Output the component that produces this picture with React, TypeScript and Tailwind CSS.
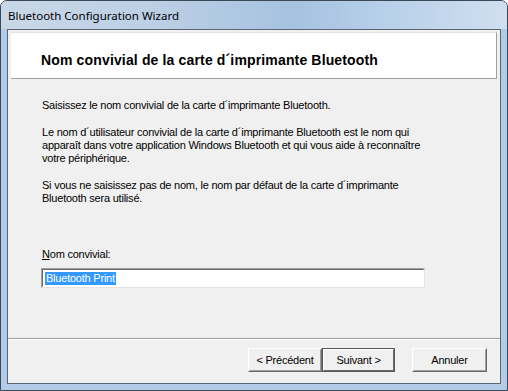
export default function App() {
  const sys = { fontFamily: '"Liberation Sans", Arial, sans-serif' };
  return (
    <div className="w-[508px] h-[391px] overflow-hidden bg-white">
      <div className="w-[508px] h-[391px] flex flex-col rounded-t-[7px] border border-[#3b4858] bg-[#b3cbe6] overflow-hidden">
        <div
          className="h-[28px] shrink-0 flex items-center pl-[7px] pt-[2px] text-[11.5px] text-black bg-[linear-gradient(90deg,#c9d8e8_0%,#bccfe5_30%,#a6c2e0_58%,#b7cfe9_75%,#cfdff0_100%)]"
          style={{ fontFamily: '"Noto Sans", "Open Sans", sans-serif' }}
        >
          Bluetooth Configuration Wizard
        </div>
        <div className="flex-1 mx-[6px] mb-[6px] border border-[#5b6675] bg-[#f0f0f0] flex flex-col" style={sys}>
          <div className="mt-[2px] mx-[3px] h-[47px] shrink-0 bg-white border-b border-r border-[#a0a0a0] border-t border-t-[#e3e3e3] pt-[19px] pl-[30px]">
            <div className="text-[14px] font-bold leading-[16px] text-black tracking-[0.15px]">
              Nom convivial de la carte d´imprimante Bluetooth
            </div>
          </div>
          <div className="pl-[34px] text-[11px] leading-[13px] text-black tracking-[-0.22px]">
            <p className="mt-[20px]">Saisissez le nom convivial de la carte d´imprimante Bluetooth.</p>
            <p className="mt-[14px]">
              Le nom d´utilisateur convivial de la carte d´imprimante Bluetooth est le nom qui
              <br />
              apparaît dans votre application Windows Bluetooth et qui vous aide à reconnaître
              <br />
              votre périphérique.
            </p>
            <p className="mt-[14px]">
              Si vous ne saisissez pas de nom, le nom par défaut de la carte d´imprimante
              <br />
              Bluetooth sera utilisé.
            </p>
            <p className="mt-[43px]">
              <span className="underline">N</span>om convivial:
            </p>
          </div>
          <div className="ml-[33px] mt-[7px] w-[384px] h-[20px] border border-t-[#a0a0a0] border-l-[#a0a0a0] border-b-[#e3e3e3] border-r-[#e3e3e3] bg-white">
            <div className="h-full border border-t-[#696969] border-l-[#696969] border-b-white border-r-white flex items-center pl-[2px]">
              <span className="bg-[#3399ff] text-white text-[11px] leading-[13px] px-[1px] tracking-[-0.22px]">Bluetooth Print</span>
            </div>
          </div>
          <div className="flex-1" />
          <div className="h-[2px] border-t border-[#a0a0a0] border-b border-b-white mx-0" />
          <div className="flex justify-end pt-[8px] pb-[11px] pr-[13px] text-[11px] text-black tracking-[-0.22px]">
            <button className="w-[74px] h-[24px] bg-[#f0f0f0] border border-t-white border-l-white border-b-[#696969] border-r-[#696969]">
              <div className="h-full flex items-center justify-center border border-transparent border-b-[#a0a0a0] border-r-[#a0a0a0]">
                &lt; Précédent
              </div>
            </button>
            <button className="w-[73px] h-[24px] bg-[#f0f0f0] border border-[#5a5a5a]">
              <div className="h-full border border-t-white border-l-white border-b-[#696969] border-r-[#696969] flex items-center justify-center">
                Suivant &gt;
              </div>
            </button>
            <button className="ml-[17px] w-[75px] h-[24px] bg-[#f0f0f0] border border-t-white border-l-white border-b-[#696969] border-r-[#696969]">
              <div className="h-full flex items-center justify-center border border-transparent border-b-[#a0a0a0] border-r-[#a0a0a0]">
                Annuler
              </div>
            </button>
          </div>
        </div>
      </div>
    </div>
  );
}
